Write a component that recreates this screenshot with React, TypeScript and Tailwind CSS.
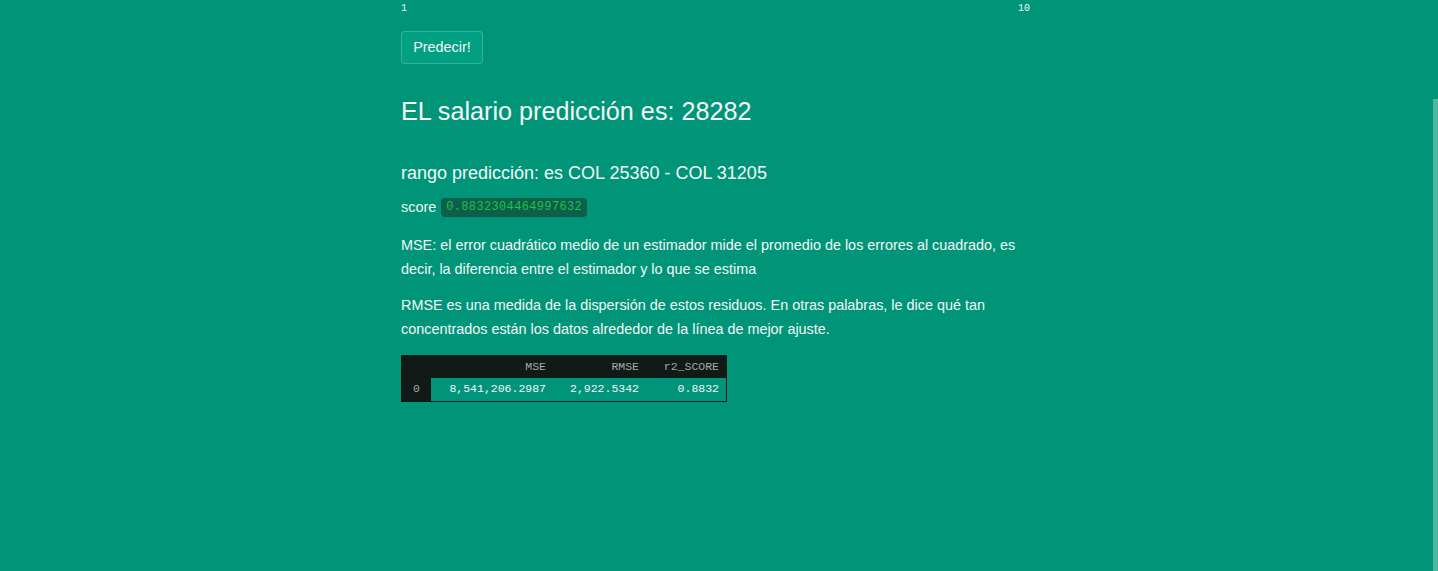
import React from "react";

export default function App() {
  const font = { fontFamily: '"Liberation Sans", Arial, sans-serif' };
  return (
    <div className="relative min-h-[571px] w-full overflow-hidden bg-[#009579] text-[#f3f7f6]" style={font}>
      <div className="absolute right-0 top-[99px] bottom-0 w-[5px] bg-[#4fb6a2]" />
      <div className="ml-[401px] w-[629px] flex flex-col">
        <div className="flex justify-between pt-[3px] font-['Liberation_Mono',monospace] text-[10px] leading-[12px] text-[#f3f7f6]">
          <span>1</span>
          <span>10</span>
        </div>
        <div className="mt-[16px]">
          <button className="h-[33px] w-[82px] rounded-[4px] border border-white/20 bg-[#02a083] text-[14.4px] text-[#f3f7f6]">
            Predecir!
          </button>
        </div>
        <h1 className="mt-[31px] text-[25.2px] leading-[32px]">EL salario predicción es: 28282</h1>
        <h3 className="mt-[34px] text-[18px] leading-[24px]">rango predicción: es COL 25360 - COL 31205</h3>
        <div className="mt-[12px] flex items-center gap-[5px] text-[14.4px]">
          <span>score</span>
          <code className="rounded-[4px] bg-[#0e5f49] px-[5px] py-[1px] font-['Liberation_Mono',monospace] text-[12px] leading-[17px] tracking-[0.35px] text-[#1cc24a]">
            0.8832304464997632
          </code>
        </div>
        <p className="mt-[14px] text-[14.4px] leading-[24px]">
          MSE: el error cuadrático medio de un estimador mide el promedio de los errores al cuadrado, es decir, la diferencia entre el estimador y lo que se estima
        </p>
        <p className="mt-[12px] text-[14.4px] leading-[24px]">
          RMSE es una medida de la dispersión de estos residuos. En otras palabras, le dice qué tan concentrados están los datos alrededor de la línea de mejor ajuste.
        </p>
        <div className="mt-[14px] w-[326px] bg-[#111a17] p-[1px] font-['Liberation_Mono',monospace] text-[11.5px]">
          <div className="flex h-[22px] items-center text-[#a5a9a8]">
            <div className="w-[29px]" />
            <div className="w-[115px] text-right">MSE</div>
            <div className="w-[93px] text-right">RMSE</div>
            <div className="w-[80px] text-right">r2_SCORE</div>
          </div>
          <div className="flex h-[23px] items-center">
            <div className="w-[29px] h-full flex items-center justify-center text-[#a5a9a8]">0</div>
            <div className="flex h-full flex-1 items-center bg-[#00957a] text-[#f3f7f6]">
              <div className="w-[115px] text-right">8,541,206.2987</div>
              <div className="w-[93px] text-right">2,922.5342</div>
              <div className="w-[80px] text-right">0.8832</div>
            </div>
          </div>
        </div>
      </div>
    </div>
  );
}
